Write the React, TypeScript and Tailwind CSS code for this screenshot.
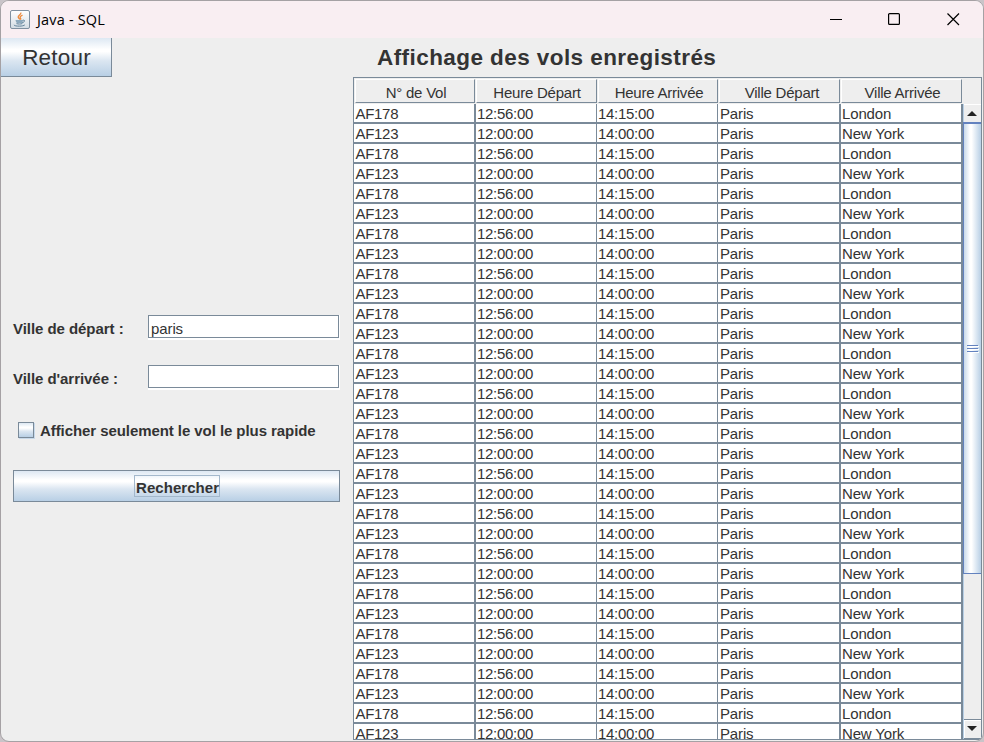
import type { ReactNode } from "react";

const flights = Array.from({ length: 32 }, (_, i) =>
  i % 2 === 0
    ? ["AF178", "12:56:00", "14:15:00", "Paris", "London"]
    : ["AF123", "12:00:00", "14:00:00", "Paris", "New York"]
);

const columns = [
  { title: "N° de Vol", width: "w-[122px]", line: "border-r-2", gap: "pl-[1.500px]" },
  { title: "Heure Départ", width: "w-[121px]", line: "border-r", gap: "pl-[1px]" },
  { title: "Heure Arrivée", width: "w-[121px]", line: "border-r", gap: "pl-[1px]" },
  { title: "Ville Départ", width: "w-[123px]", line: "border-r-2", gap: "pl-[2px]" },
  { title: "Ville Arrivée", width: "w-[122px]", line: "border-r-2", gap: "pl-[1px]" },
];

const headerWidths = ["w-[121px]", "w-[122px]", "w-[121px]", "w-[122px]", "w-[122px]"];
const headerShift = ["pl-[2px]", "pl-[1px]", "pl-[2px]", "pl-[5px]", "pl-[2px]"];

const metal =
  "bg-[linear-gradient(180deg,#dde8f3_0%,#ffffff_30%,#ffffff_36%,#dbe6f1_60%,#b8cfe5_100%)]";

function TitleBar() {
  return (
    <header className="flex h-[37px] shrink-0 items-center bg-[#f9eef2] text-black">
      <svg className="ml-[9px] shrink-0" width="20" height="20" viewBox="0 0 20 20">
        <defs>
          <linearGradient id="tile" x1="0" y1="0" x2="0" y2="1">
            <stop offset="0" stopColor="#fff" />
            <stop offset="1" stopColor="#d3dce4" />
          </linearGradient>
        </defs>
        <rect x=".5" y=".5" width="19" height="18" rx="1.5" fill="url(#tile)" stroke="#7f90a0" />
        <path d="M10.8 2.500C11.8 4.300 7.600 5.400 8.200 7.200c.3 1 1.400 1.500 1.700 2.300M12.500 5.200c-2.300 1.100-3 1.800-2 3 .5.600.2 1-.3 1.400" fill="none" stroke="#ec8a3d" strokeWidth="1.300" />
        <path d="M5.500 9.900h7.500c-.2 1.500-.3 2.300-1 3.100H7c-.9-.8-1.200-1.600-1.500-3.100z" fill="#8da9bd" />
        <path d="M12.800 10.200c2.600-.6 2.200 1.900-.6 2.500M6.500 13.600c2 .6 4 .5 5.800 0M4 14.800c-.5 1.600 9 1.900 10.800.1" fill="none" stroke="#5f8199" strokeWidth="1" />
      </svg>
      <h1 className="ml-[7px] font-['Open_Sans',sans-serif] text-[14.500px] tracking-[0.180px] whitespace-nowrap">
        Java - SQL
      </h1>
      <svg className="ml-auto mr-[23px]" width="130" height="16" viewBox="0 0 130 16" fill="none" stroke="#000" strokeWidth="1.200">
        <path d="M0 7.500h12" />
        <rect x="58.600" y="1.600" width="10.800" height="10.800" rx="1" />
        <path d="M117.500 1.500l11.500 11.500M129 1.500l-11.500 11.500" />
      </svg>
    </header>
  );
}

function Field({ label, value }: { label: string; value: string }) {
  return (
    <label className="flex h-[24px] items-center">
      <span className="w-[135px] pt-[4px] font-bold leading-[20px] tracking-[-0.050px]">{label}</span>
      <span className="h-[25px] w-[192px] self-start border-r border-b-2 border-white">
        <span className="block h-[23px] border border-[#7a8a99] bg-white pt-[3px] pl-[2px] leading-[20px] tracking-[-0.100px]">
          {value}
        </span>
      </span>
    </label>
  );
}

function SearchPanel() {
  return (
    <aside className="flex w-[352px] shrink-0 flex-col">
      <button className={`h-[39px] w-[111px] border-r border-b border-[#7a8a99] pt-[1px] pl-[1px] text-[22.500px] leading-[36px] tracking-[0.200px] ${metal}`}>
        Retour
      </button>
      <form className="mt-[238px] ml-[12px] flex w-[327px] flex-col">
        <Field label="Ville de départ :" value="paris" />
        <div className="h-[26px]" />
        <Field label="Ville d'arrivée :" value="" />
        <div className="mt-[31px] flex h-[20px] items-center pl-[5px]">
          <span className={`h-[16px] w-[16px] border border-[#7a8a99] shadow-[1px_1px_0_#c8d9ea] ${metal}`} />
          <span className="ml-[6px] pt-[2px] font-bold tracking-[-0.070px] whitespace-nowrap">Afficher seulement le vol le plus rapide</span>
        </div>
        <div className={`mt-[30px] flex h-[32px] items-center justify-center border border-[#7a8a99] ${metal}`}>
          <span className="h-[22px] w-[86px] border border-[#a3b8cc] pt-[2px] pl-[1.500px] font-bold leading-[20px] tracking-[0.050px] whitespace-nowrap">
            Rechercher
          </span>
        </div>
      </form>
    </aside>
  );
}

function HeaderCell({ width, shift, children }: { width: string; shift: string; children: ReactNode }) {
  return (
    <div className={`${width} shrink-0 pt-[1px] pl-[1px]`}>
      <div className={`h-[24px] border-t border-r border-b border-l border-t-white border-r-[#7a8a99] border-b-[#7a8a99] border-l-white pt-[3px] text-center leading-[20px] tracking-[-0.230px] whitespace-nowrap ${shift}`}>
        {children}
      </div>
    </div>
  );
}

function Arrow({ down }: { down?: boolean }) {
  return (
    <svg width="10" height="5" viewBox="0 0 10 5">
      <path d={down ? "M0 0h10L5 5z" : "M0 5h10L5 0z"} fill="#222" />
    </svg>
  );
}

function ScrollBar() {
  return (
    <div className="flex w-[18px] shrink-0 flex-col border-l border-[#b8cfe5] bg-[#eeeeee]">
      <div className="flex h-[18px] items-center justify-center border-t border-white pr-[1px] pb-[1px]">
        <Arrow />
      </div>
      <div className="-ml-px flex h-[452px] shrink-0 items-center justify-center border-t-2 border-b border-l border-[#6382bf] bg-[linear-gradient(90deg,#c8d9ea_0%,#ffffff_35%,#ffffff_45%,#b8cfe5_100%)]">
        <div className="flex w-[11px] flex-col gap-[2px]">
          <i className="h-px bg-[#6382bf] shadow-[1px_1px_0_white]" />
          <i className="h-px bg-[#6382bf] shadow-[1px_1px_0_white]" />
          <i className="h-px bg-[#6382bf] shadow-[1px_1px_0_white]" />
        </div>
      </div>
      <div className="mt-auto flex h-[20px] items-center justify-center border-t border-b border-[#7a8a99] pr-[1px] pb-[1px] shadow-[inset_1px_1px_0_white]">
        <Arrow down />
      </div>
    </div>
  );
}

function FlightTable() {
  return (
    <div className="flex h-[663px] w-[629px] flex-col overflow-hidden border border-[#7a8a99]">
      <div className="flex h-[26px] shrink-0">
        {columns.map((c, i) => (
          <HeaderCell key={c.title} width={headerWidths[i]} shift={headerShift[i]}>{c.title}</HeaderCell>
        ))}
      </div>
      <div className="flex min-h-0 flex-1">
        <div className="w-[609px] shrink-0 overflow-hidden">
          {flights.map((row, i) => (
            <div key={i} className="flex h-[20px]">
              {row.map((value, j) => (
                <div
                  key={j}
                  className={`h-[20px] shrink-0 border-b-2 border-[#7a8a99] bg-white leading-[20px] whitespace-nowrap ${j < 3 ? "tracking-[-0.300px]" : "tracking-[-0.150px]"} ${columns[j].width} ${columns[j].line} ${columns[j].gap}`}
                >
                  {value}
                </div>
              ))}
            </div>
          ))}
        </div>
        <ScrollBar />
      </div>
    </div>
  );
}

export default function App() {
  return (
    <div className="h-[742px] w-[984px] overflow-hidden bg-[#c9c4c8]">
      <div className="flex h-[742px] flex-col overflow-hidden rounded-[9px] border border-[#a5a1a4] bg-[#eeeeee] font-['Liberation_Sans',Arial,sans-serif] text-[15px] text-[#333333]">
        <TitleBar />
        <main className="flex min-h-0 flex-1">
          <SearchPanel />
          <section className="flex flex-col">
            <h2 className="h-[39px] pl-[24px] text-[22.500px] leading-[40px] font-bold tracking-[0.430px] whitespace-nowrap">
              Affichage des vols enregistrés
            </h2>
            <FlightTable />
          </section>
        </main>
      </div>
    </div>
  );
}
